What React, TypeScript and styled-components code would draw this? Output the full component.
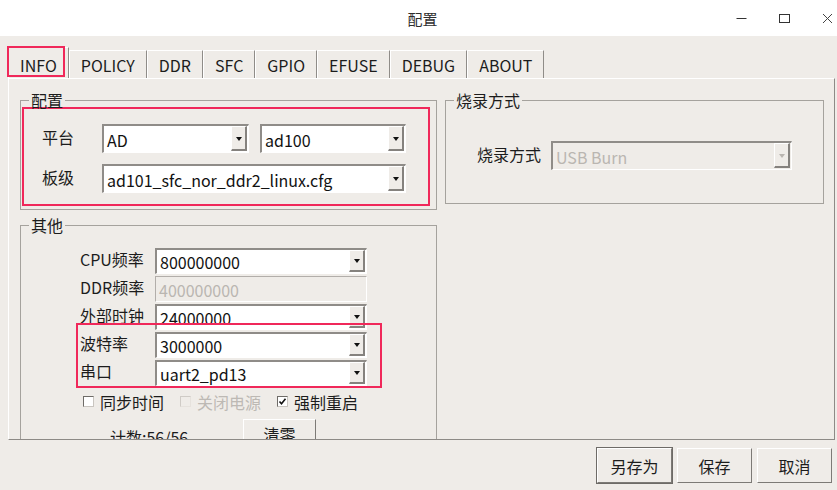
import styled, { createGlobalStyle } from "styled-components";

const GlobalStyle = createGlobalStyle`
  html, body {
    margin: 0;
    padding: 0;
  }
  body {
    font-family: "Noto Sans CJK SC", "Noto Sans", sans-serif;
    font-size: 16px;
    color: #1c1c1c;
    background: #efece8;
  }
  #root {
    width: 837px;
    height: 490px;
    overflow: hidden;
  }
`;

const Window = styled.div`
  width: 837px;
  height: 490px;
  display: flex;
  flex-direction: column;
  background: #efece8;
`;

const TitleBar = styled.div`
  height: 36px;
  flex: none;
  background: #fff;
  display: grid;
  grid-template-columns: 1fr auto 1fr;
  align-items: center;
`;

const Title = styled.div`
  font-size: 15px;
  color: #2e2e2e;
  margin-left: 8px;
`;

const Controls = styled.div`
  justify-self: end;
  display: flex;
  gap: 23px;
`;

const Control = styled.span`
  width: 20px;
  height: 20px;
  display: flex;
  align-items: center;
  justify-content: center;
`;

const TabBar = styled.div`
  height: 42px;
  flex: none;
  display: flex;
  align-items: flex-end;
  padding-left: 8px;
`;

const Tab = styled.div<{ $active?: boolean }>`
  position: relative;
  box-sizing: border-box;
  height: ${(p) => (p.$active ? 31 : 28)}px;
  padding: ${(p) => (p.$active ? "3px" : "0")} 11px 0;
  display: flex;
  align-items: center;
  font-size: 16px;
  border-top: 1px solid #fff;
  border-left: 1px solid #fff;
  border-right: 1px solid #8f8c88;
`;

const Mark = styled.span<{ $top: number; $left: number; $w: number; $h: number }>`
  position: absolute;
  top: ${(p) => p.$top}px;
  left: ${(p) => p.$left}px;
  width: ${(p) => p.$w}px;
  height: ${(p) => p.$h}px;
  box-sizing: border-box;
  border: 2px solid #f0285a;
  pointer-events: none;
`;

const Panel = styled.div`
  height: 362px;
  flex: none;
  box-sizing: border-box;
  margin: 0 2px 0 8px;
  border-top: 1px solid #fff;
  border-left: 1px solid #fff;
  border-right: 1px solid #8d8a86;
  border-bottom: 1px solid #8d8a86;
  overflow: hidden;
  display: flex;
  align-items: flex-start;
  gap: 8px;
  padding: 13px 10px 0 11px;
`;

const Column = styled.div`
  display: flex;
  flex-direction: column;
  gap: 7px;
`;

const Group = styled.fieldset<{ $w: number }>`
  position: relative;
  width: ${(p) => p.$w}px;
  box-sizing: border-box;
  min-width: 0;
  margin: 0;
  padding: 0;
  border: 1px solid #a5a29d;
`;

const Legend = styled.legend`
  margin-left: 8px;
  padding: 0 2px;
  font-size: 16px;
  line-height: 16px;
`;

const GroupBody = styled.div<{ $pad: string }>`
  padding: ${(p) => p.$pad};
`;

const Highlight = styled.div`
  margin: -1px 6px 3px 1px;
  border: 2px solid #f0285a;
  padding: 15px 22px 11px 18px;
  display: flex;
  flex-direction: column;
  gap: 11px;
`;

const Row = styled.div<{ $gap?: number }>`
  display: flex;
  align-items: center;
  gap: ${(p) => p.$gap ?? 0}px;
`;

const Stack = styled.div`
  display: flex;
  flex-direction: column;
  gap: 2px;
`;

const Label = styled.span<{ $w: number }>`
  width: ${(p) => p.$w}px;
  flex: none;
  margin-top: -4px;
  white-space: nowrap;
`;

const Combo = styled.div<{ $w: number; $h: number; $disabled?: boolean }>`
  width: ${(p) => p.$w}px;
  height: ${(p) => p.$h}px;
  flex: none;
  box-sizing: border-box;
  display: flex;
  border-style: solid;
  border-width: 2px 1px 1px 2px;
  border-color: #8f8c88 #fff #fff #8f8c88;
  background: ${(p) => (p.$disabled ? "#efece8" : "#fff")};
  color: ${(p) => (p.$disabled ? "#bab6b1" : "#111")};
`;

const ComboText = styled.span`
  flex: 1;
  padding: 1px 0 0 3px;
  display: flex;
  align-items: center;
  white-space: nowrap;
  overflow: hidden;
`;

const ComboButton = styled.span<{ $disabled?: boolean }>`
  width: 16px;
  flex: none;
  box-sizing: border-box;
  margin: 0 1px 1px 0;
  background: #efece8;
  border-style: solid;
  border-width: 1px 2px 2px 1px;
  border-color: #fff #85827e #85827e #fff;
  display: flex;
  align-items: center;
  justify-content: center;

  &::after {
    content: "";
    border-left: 3.5px solid transparent;
    border-right: 3.5px solid transparent;
    border-top: 4px solid ${(p) => (p.$disabled ? "#b9b5b0" : "#111")};
    margin-top: 1px;
  }
`;

const Entry = styled.div<{ $w: number; $h: number }>`
  width: ${(p) => p.$w}px;
  height: ${(p) => p.$h}px;
  box-sizing: border-box;
  border-style: solid;
  border-width: 1px;
  border-color: #b2aeaa #fff #fff #b2aeaa;
  padding: 1px 0 0 3px;
  display: flex;
  align-items: center;
  color: #bab6b1;
`;

const Checks = styled.div`
  display: flex;
  align-items: center;
  gap: 16px;
  height: 20px;
  margin: 6px 0 0 3px;
`;

const CheckItem = styled.label<{ $disabled?: boolean }>`
  display: flex;
  align-items: center;
  gap: 6px;
  color: ${(p) => (p.$disabled ? "#bdb9b4" : "#1c1c1c")};
`;

const Box = styled.span<{ $disabled?: boolean }>`
  width: 11px;
  height: 11px;
  box-sizing: border-box;
  border: 1px solid;
  border-color: ${(p) =>
    p.$disabled ? "#cfcbc6 #e6e2dd #e6e2dd #cfcbc6" : "#6f6c68 #c9c5c0 #c9c5c0 #6f6c68"};
  background: ${(p) => (p.$disabled ? "#efece8" : "#fff")};
  display: flex;
  align-items: center;
  justify-content: center;
  margin-top: -2px;
`;

const CountRow = styled.div`
  display: flex;
  align-items: flex-start;
  margin: 7px 0 0 30px;
`;

const Count = styled.span`
  width: 133px;
  padding-top: 6px;
`;

const Button = styled.button<{ $default?: boolean; $w?: number }>`
  width: ${(p) => p.$w ?? 75}px;
  height: ${(p) => (p.$w ? 30 : 35)}px;
  box-sizing: border-box;
  font-family: inherit;
  font-size: 16px;
  color: #1c1c1c;
  background: #efece8;
  border: 1px solid;
  border-color: #fff #7d7a76 #7d7a76 #fff;
  padding: 0;
  ${(p) => p.$default && "box-shadow: 0 0 0 1px #6e6b67;"}
`;

const Footer = styled.div`
  display: flex;
  justify-content: flex-end;
  gap: 5px;
  padding: 8px 5px 0 0;
`;

const tabs = ["INFO", "POLICY", "DDR", "SFC", "GPIO", "EFUSE", "DEBUG", "ABOUT"];

function Select({ value, w, h, disabled }: { value: string; w: number; h: number; disabled?: boolean }) {
  return (
    <Combo $w={w} $h={h} $disabled={disabled}>
      <ComboText>{value}</ComboText>
      <ComboButton $disabled={disabled} />
    </Combo>
  );
}

function Check({ label, checked, disabled }: { label: string; checked?: boolean; disabled?: boolean }) {
  return (
    <CheckItem $disabled={disabled}>
      <Box $disabled={disabled}>
        {checked && (
          <svg width="9" height="9" viewBox="0 0 9 9">
            <path d="M1.5 4.5 L3.5 6.8 L7.5 1.8" fill="none" stroke="#111" strokeWidth="1.6" />
          </svg>
        )}
      </Box>
      {label}
    </CheckItem>
  );
}

export default function App() {
  return (
    <>
      <GlobalStyle />
      <Window>
        <TitleBar>
          <span />
          <Title>配置</Title>
          <Controls>
            <Control>
              <svg width="11" height="11" viewBox="0 0 11 11">
                <path d="M0.5 5.5 H10.5" stroke="#333" strokeWidth="1" />
              </svg>
            </Control>
            <Control>
              <svg width="11" height="11" viewBox="0 0 11 11">
                <rect x="0.5" y="1.5" width="10" height="8" fill="none" stroke="#333" strokeWidth="1" />
              </svg>
            </Control>
            <Control>
              <svg width="11" height="11" viewBox="0 0 11 11">
                <path d="M1 1 L10 10 M10 1 L1 10" stroke="#444" strokeWidth="1" />
              </svg>
            </Control>
          </Controls>
        </TitleBar>

        <TabBar>
          {tabs.map((t, i) => (
            <Tab key={t} $active={i === 0}>
              {t}
              {i === 0 && <Mark $top={-2} $left={-2} $w={58} $h={31} />}
            </Tab>
          ))}
        </TabBar>

        <Panel>
          <Column>
            <Group $w={417}>
              <Legend>配置</Legend>
              <Highlight>
                <Row>
                  <Label $w={60}>平台</Label>
                  <Row $gap={11}>
                    <Select value="AD" w={147} h={29} />
                    <Select value="ad100" w={146} h={29} />
                  </Row>
                </Row>
                <Row>
                  <Label $w={60}>板级</Label>
                  <Select value="ad101_sfc_nor_ddr2_linux.cfg" w={304} h={29} />
                </Row>
              </Highlight>
            </Group>

            <Group $w={417}>
              <Legend>其他</Legend>
              <GroupBody $pad="15px 0 40px 59px">
                <Stack>
                  <Row>
                    <Label $w={75}>CPU频率</Label>
                    <Select value="800000000" w={212} h={26} />
                  </Row>
                  <Row>
                    <Label $w={75}>DDR频率</Label>
                    <Entry $w={212} $h={26}>400000000</Entry>
                  </Row>
                  <Row>
                    <Label $w={75}>外部时钟</Label>
                    <Select value="24000000" w={212} h={26} />
                  </Row>
                  <Row>
                    <Label $w={75}>波特率</Label>
                    <Select value="3000000" w={212} h={26} />
                  </Row>
                  <Row>
                    <Label $w={75}>串口</Label>
                    <Select value="uart2_pd13" w={212} h={26} />
                  </Row>
                </Stack>
                <Checks>
                  <Check label="同步时间" />
                  <Check label="关闭电源" disabled />
                  <Check label="强制重启" checked />
                </Checks>
                <CountRow>
                  <Count>计数:56/56</Count>
                  <Button $w={73}>清零</Button>
                </CountRow>
              </GroupBody>
              <Mark $top={90} $left={55} $w={306} $h={65} />
            </Group>
          </Column>

          <Column>
            <Group $w={379}>
              <Legend>烧录方式</Legend>
              <GroupBody $pad="33px 0 33px 31px">
                <Row>
                  <Label $w={74}>烧录方式</Label>
                  <Select value="USB Burn" w={241} h={29} disabled />
                </Row>
              </GroupBody>
            </Group>
          </Column>
        </Panel>

        <Footer>
          <Button $default>另存为</Button>
          <Button>保存</Button>
          <Button>取消</Button>
        </Footer>
      </Window>
    </>
  );
}
